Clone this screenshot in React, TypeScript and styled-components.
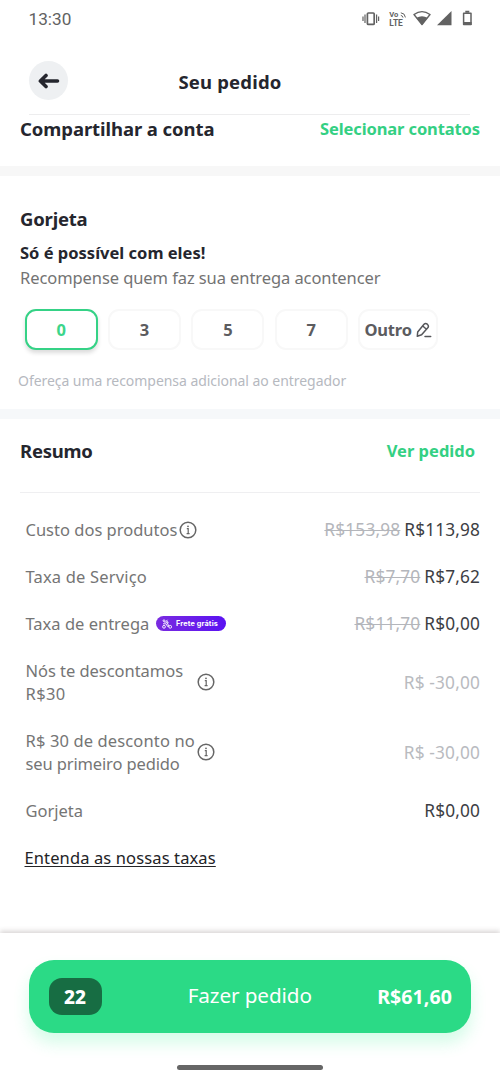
import React from "react";
import styled, { createGlobalStyle } from "styled-components";

const GlobalStyle = createGlobalStyle`
  * { box-sizing: border-box; }
  body { margin: 0; background: #fff; font-family: "Noto Sans", "Open Sans", sans-serif; color: #25262e; }
  button { font: inherit; border: 0; background: none; padding: 0; letter-spacing: inherit; }
  h1, h2, p { margin: 0; }
  svg { display: block; flex: none; }
`;

const Screen = styled.main`
  width: 500px;
  height: 1082px;
  display: flex;
  flex-direction: column;
  overflow: hidden;
`;

const StatusBar = styled.div`
  height: 38px;
  padding: 0 26px 0 28.5px;
  display: flex;
  align-items: center;
  justify-content: space-between;
  color: #626262;
`;

const Clock = styled.span`
  font: 450 17.2px/38px Roboto, sans-serif;
`;

const Header = styled.header`
  height: 77px;
  margin: 0 30px 0 29px;
  border-bottom: 1px solid #ededee;
  display: grid;
  grid-template-columns: 39px 1fr 39px;
  align-items: center;
`;

const BackButton = styled.button`
  width: 39px;
  height: 39px;
  margin-top: 9px;
  border-radius: 50%;
  background: #eef0f2;
  display: flex;
  align-items: center;
  justify-content: center;
`;

const Title = styled.h1`
  font-size: 18.5px;
  line-height: 26px;
  font-weight: 700;
  letter-spacing: 0.17px;
  text-align: center;
  padding: 12px 39px 0 0;
`;

const Heading = styled.h2<{ $spacing?: number }>`
  font-size: 18.5px;
  line-height: 26px;
  font-weight: 700;
  letter-spacing: ${(p) => p.$spacing ?? 0}px;
  white-space: nowrap;
`;

const LinkButton = styled.button<{ $spacing?: number }>`
  color: #34d083;
  font-size: 16.5px;
  line-height: 26px;
  font-weight: 700;
  letter-spacing: ${(p) => p.$spacing ?? 0}px;
  white-space: nowrap;
`;

const ShareSection = styled.section`
  height: 51px;
  padding: 1px 20px 0;
  display: flex;
  justify-content: space-between;
  align-items: flex-start;
`;

const Band = styled.div<{ $cool?: boolean }>`
  height: 10px;
  flex: none;
  background: ${(p) => (p.$cool ? "#f6f8fa" : "#f7f7f7")};
`;

const TipSection = styled.section`
  height: 233px;
  padding: 30px 20px 0;
`;

const TipLead = styled.p`
  margin-top: 9px;
  font-size: 16.5px;
  line-height: 24px;
  font-weight: 700;
`;

const TipText = styled.p`
  margin-top: 1px;
  font-size: 16.5px;
  line-height: 24px;
  letter-spacing: -0.08px;
  color: #737373;
  white-space: nowrap;
`;

const TipOptions = styled.div`
  display: flex;
  gap: 10.4px;
  margin: 19px 0 0 4.6px;
`;

const TipOption = styled.button<{ $active?: boolean; $wide?: boolean }>`
  width: ${(p) => (p.$wide ? 80 : 73)}px;
  height: 41px;
  border-radius: 11px;
  border: 2px solid ${(p) => (p.$active ? "#35d286" : "#f8f8f8")};
  box-shadow: ${(p) => (p.$active ? "0 3px 4px rgba(0, 0, 0, 0.14)" : "none")};
  background: #fff;
  color: ${(p) => (p.$active ? "#3cd58a" : "#5c5c5f")};
  font-size: 16.5px;
  font-weight: 700;
  letter-spacing: -0.15px;
  display: flex;
  align-items: center;
  justify-content: center;
  gap: 4px;
`;

const TipHint = styled.p`
  margin: 21px 0 0 -2px;
  font-size: 14px;
  line-height: 20px;
  letter-spacing: -0.05px;
  color: #b6b9bf;
  white-space: nowrap;
`;

const Summary = styled.section`
  flex: 1;
  padding: 19px 20px 0;
`;

const SummaryHead = styled.div`
  display: flex;
  justify-content: space-between;
  align-items: flex-start;
  height: 55px;
  padding-right: 5px;
  border-bottom: 1px solid #efeff1;
  margin-bottom: 13px;
`;

const Row = styled.div`
  display: flex;
  justify-content: space-between;
  align-items: center;
  padding: 12px 0 12px 5.5px;
  font-size: 16.5px;
  line-height: 23px;
`;

const Label = styled.div<{ $spacing?: number; $gap?: number }>`
  display: flex;
  align-items: center;
  gap: ${(p) => p.$gap ?? 0}px;
  color: #757575;
  letter-spacing: ${(p) => p.$spacing ?? 0}px;
  white-space: nowrap;
`;

const WrappedLabel = styled.span`
  width: 170px;
`;

const LabelLine = styled.span<{ $spacing: number }>`
  display: block;
  letter-spacing: ${(p) => p.$spacing}px;
`;

const Prices = styled.div`
  display: flex;
  gap: 4px;
  color: #3d3e44;
  font-size: 17.3px;
  letter-spacing: 0.12px;
`;

const OldPrice = styled.s`
  color: #b4b6bb;
  letter-spacing: 0.16px;
  text-decoration-thickness: 1px;
`;

const Discount = styled.span`
  color: #b9bbbf;
  font-size: 17.3px;
  letter-spacing: 0.15px;
`;

const FreeBadge = styled.span`
  width: 70px;
  height: 15px;
  border-radius: 8px;
  background: linear-gradient(90deg, #7a2be0, #5a12f2);
  color: #fff;
  display: flex;
  align-items: center;
  padding-left: 6px;
  gap: 4px;
  font: 700 7.3px/15px Inter, sans-serif;
  letter-spacing: 0.12px;
`;

const FeesLink = styled.a`
  display: inline-block;
  margin: 12px 0 0 4.5px;
  font-size: 16.5px;
  line-height: 24px;
  letter-spacing: 0.12px;
  color: #232326;
  text-decoration: underline;
  text-decoration-thickness: 1px;
  text-underline-offset: 2px;
`;

const Footer = styled.footer`
  height: 149px;
  padding: 27px 29px 0;
  box-shadow: 0 -2px 5px rgba(60, 40, 40, 0.2);
  display: flex;
  flex-direction: column;
  align-items: center;
`;

const OrderButton = styled.button`
  width: 442px;
  height: 73px;
  border-radius: 25px;
  background: #2bda86;
  box-shadow: 0 10px 16px rgba(43, 240, 140, 0.2);
  color: #fff;
  display: grid;
  grid-template-columns: 53px 1fr 77px;
  align-items: center;
  padding: 0 19px 0 19.5px;
`;

const Count = styled.span`
  height: 37px;
  border-radius: 13px;
  background: #176d43;
  font-size: 19px;
  font-weight: 800;
  line-height: 38px;
`;

const OrderText = styled.span`
  font-size: 20.7px;
  line-height: 28px;
  font-weight: 400;
  padding: 0 0 3px 23px;
  letter-spacing: -0.1px;
  text-align: center;
`;

const Total = styled.span`
  font-size: 19.5px;
  line-height: 26px;
  font-weight: 750;
  letter-spacing: 0.1px;
  display: flex;
  justify-content: flex-end;
  white-space: nowrap;
`;

const HomeBar = styled.div`
  width: 146px;
  height: 5px;
  margin-top: 32px;
  border-radius: 3px;
  background: #666;
`;

const StatusIcons = () => (
  <svg width="114" height="20" viewBox="360 9 114 20" fill="none">
    <g stroke="currentColor">
      <rect x="367.4" y="13" width="6.8" height="11.4" rx="1" strokeWidth="1.7" />
      <path d="M365 14.5v8.6M376.6 14.5v8.6M363 16.5v4.6M378.6 16.5v4.6" strokeWidth="1.2" />
      <path d="M400.8 12.8q4.2.4 4.6 4.6M400.8 15.4q2 .3 2.2 2.2" strokeWidth="1" />
    </g>
    <g fill="currentColor" fontFamily="Roboto, sans-serif" fontWeight="700">
      <text x="389.3" y="17.3" fontSize="7.6">Vo</text>
      <text x="389.3" y="25.6" fontSize="8.4">LTE</text>
    </g>
    <path d="M414 14.5Q422 8.7 430 14.5L422 24.6Z" stroke="currentColor" strokeWidth="1.4" strokeLinejoin="round" />
    <path d="M416.4 17.8q5.6-3 11.2 0L422 25Z" fill="currentColor" />
    <path d="M437 25.3L451.5 11v14.3Z" fill="currentColor" />
    <path d="M463.6 13.2h7.4v11.4h-7.4z" stroke="currentColor" strokeWidth="1.5" strokeLinejoin="round" />
    <path d="M465.3 10.8h4v2h-4zM463 22h8.6v3H463z" fill="currentColor" />
  </svg>
);

const BackArrow = () => (
  <svg width="22" height="16" viewBox="0 0 22 16" fill="none" stroke="#25262e" strokeWidth="3.6" strokeLinecap="round" strokeLinejoin="round">
    <path d="M19.5 8H3M8 2.5L2.4 8L8 13.5" />
  </svg>
);

const InfoIcon = () => (
  <svg width="18" height="18" viewBox="0 0 18 18" fill="none" stroke="#666">
    <circle cx="9" cy="9" r="7.8" strokeWidth="1.5" />
    <path d="M7.8 7.7h1.4v5M7.6 12.7h3" strokeWidth="1.2" />
    <circle cx="9" cy="5.3" r="0.9" fill="#666" stroke="none" />
  </svg>
);

const PencilIcon = () => (
  <svg width="16" height="16" viewBox="0 0 16 16" fill="none" stroke="#55565a" strokeWidth="1.5" strokeLinecap="round" strokeLinejoin="round">
    <path d="M1.3 14.2L1.7 10L8 2.3Q9.5.8 11.3 2.2Q13.1 3.8 12 5.5L5.6 12.8L1.3 14.2ZM6.8 4L10.4 7.2M9 14.5H14.7" />
  </svg>
);

const DeliveryIcon = () => (
  <svg width="10" height="10" viewBox="0 0 10 10" fill="none" stroke="#fff" strokeWidth="0.9">
    <circle cx="2" cy="7.8" r="1.4" />
    <circle cx="8.2" cy="7.8" r="1.4" />
    <path d="M1 4.8h3l1.5 2.6h1.2L5.3 3.5M5.5.8L2.5 4" />
    <circle cx="2" cy="1.7" r="0.9" />
    <circle cx="5.3" cy="3.4" r="0.8" />
  </svg>
);

export default function App() {
  return (
    <Screen>
      <GlobalStyle />
      <StatusBar>
        <Clock>13:30</Clock>
        <StatusIcons />
      </StatusBar>
      <Header>
        <BackButton aria-label="Voltar">
          <BackArrow />
        </BackButton>
        <Title>Seu pedido</Title>
      </Header>
      <ShareSection>
        <Heading $spacing={-0.07}>Compartilhar a conta</Heading>
        <LinkButton $spacing={-0.11}>Selecionar contatos</LinkButton>
      </ShareSection>
      <Band />
      <TipSection>
        <Heading $spacing={-0.2}>Gorjeta</Heading>
        <TipLead>Só é possível com eles!</TipLead>
        <TipText>Recompense quem faz sua entrega acontencer</TipText>
        <TipOptions>
          <TipOption $active>0</TipOption>
          <TipOption>3</TipOption>
          <TipOption>5</TipOption>
          <TipOption>7</TipOption>
          <TipOption $wide>
            Outro
            <PencilIcon />
          </TipOption>
        </TipOptions>
        <TipHint>Ofereça uma recompensa adicional ao entregador</TipHint>
      </TipSection>
      <Band $cool />
      <Summary>
        <SummaryHead>
          <Heading $spacing={-0.25}>Resumo</Heading>
          <LinkButton>Ver pedido</LinkButton>
        </SummaryHead>
        <Row>
          <Label $gap={1.5}>
            Custo dos produtos
            <InfoIcon />
          </Label>
          <Prices>
            <OldPrice>R$153,98</OldPrice>
            <span>R$113,98</span>
          </Prices>
        </Row>
        <Row>
          <Label $spacing={0.17}>Taxa de Serviço</Label>
          <Prices>
            <OldPrice>R$7,70</OldPrice>
            <span>R$7,62</span>
          </Prices>
        </Row>
        <Row>
          <Label $gap={6.8}>
            Taxa de entrega
            <FreeBadge>
              <DeliveryIcon />
              Frete grátis
            </FreeBadge>
          </Label>
          <Prices>
            <OldPrice>R$11,70</OldPrice>
            <span>R$0,00</span>
          </Prices>
        </Row>
        <Row>
          <Label $gap={1.5}>
            <WrappedLabel>
              <LabelLine $spacing={-0.04}>Nós te descontamos</LabelLine>
              <LabelLine $spacing={0.4}>R$30</LabelLine>
            </WrappedLabel>
            <InfoIcon />
          </Label>
          <Discount>R$ -30,00</Discount>
        </Row>
        <Row>
          <Label $gap={1.5}>
            <WrappedLabel>
              <LabelLine $spacing={0.13}>R$ 30 de desconto no</LabelLine>
              <LabelLine $spacing={-0.13}>seu primeiro pedido</LabelLine>
            </WrappedLabel>
            <InfoIcon />
          </Label>
          <Discount>R$ -30,00</Discount>
        </Row>
        <Row>
          <Label>Gorjeta</Label>
          <Prices>
            <span>R$0,00</span>
          </Prices>
        </Row>
        <FeesLink>Entenda as nossas taxas</FeesLink>
      </Summary>
      <Footer>
        <OrderButton>
          <Count>22</Count>
          <OrderText>Fazer pedido</OrderText>
          <Total>R$61,60</Total>
        </OrderButton>
        <HomeBar />
      </Footer>
    </Screen>
  );
}
